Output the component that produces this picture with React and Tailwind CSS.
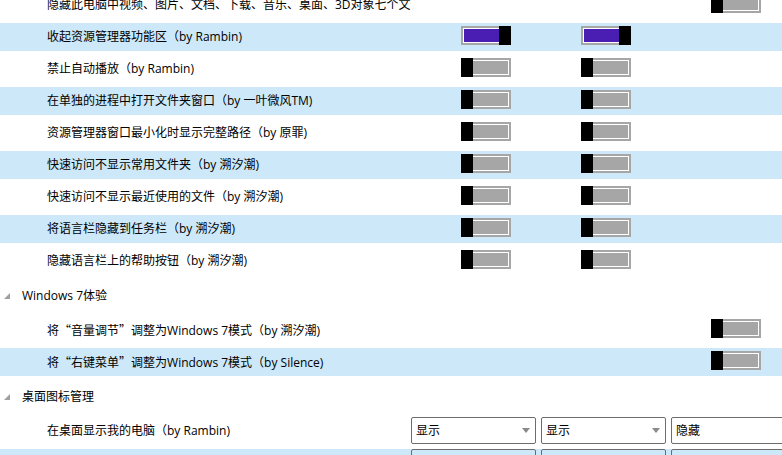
import React from "react";

const FONT = { fontFamily: '"Open Sans", "Noto Sans CJK SC", sans-serif' };

const Q = ({ children }) => <span className="font-['Noto_Sans_CJK_SC',sans-serif]">{children}</span>;

const TOP_ROWS = [
  { text: "隐藏此电脑中视频、图片、文档、下载、音乐、桌面、3D对象七个文件夹", cols: [null, null, false] },
  { text: "收起资源管理器功能区（by Rambin)", cols: [true, true, null] },
  { text: "禁止自动播放（by Rambin)", cols: [false, false, null] },
  { text: "在单独的进程中打开文件夹窗口（by 一叶微风TM)", cols: [false, false, null] },
  { text: "资源管理器窗口最小化时显示完整路径（by 原罪)", cols: [false, false, null] },
  { text: "快速访问不显示常用文件夹（by 溯汐潮)", cols: [false, false, null] },
  { text: "快速访问不显示最近使用的文件（by 溯汐潮)", cols: [false, false, null] },
  { text: "将语言栏隐藏到任务栏（by 溯汐潮)", cols: [false, false, null] },
  { text: "隐藏语言栏上的帮助按钮（by 溯汐潮)", cols: [false, false, null] },
];

const WIN7_ROWS = [
  {
    key: "volume",
    text: <>将<Q>“</Q>音量调节<Q>”</Q>调整为Windows 7模式（by 溯汐潮)</>,
    cols: [null, null, false],
  },
  {
    key: "menu",
    text: <>将<Q>“</Q>右键菜单<Q>”</Q>调整为Windows 7模式（by Silence)</>,
    cols: [null, null, false],
  },
];

const ICON_ROWS = [
  { text: "在桌面显示我的电脑（by Rambin)", values: ["显示", "显示", "隐藏"] },
  { text: "在桌面显示回收站（by Rambin)", values: ["显示", "显示", "显示"] },
];

function Toggle({ on }) {
  return (
    <div className="relative w-[50px] h-[19px] border-2 border-[#a6a6a6] bg-[#a6a6a6]">
      <div className={`h-full w-full border border-white ${on ? "bg-[#4a1db3]" : "bg-[#a6a6a6]"}`} />
      <div className={`absolute -top-[2px] h-[19px] w-[12px] bg-black ${on ? "-right-[2px]" : "-left-[2px]"}`} />
    </div>
  );
}

function Label({ text }) {
  return (
    <div className="flex items-center pl-[47px] overflow-visible">
      <div className="w-[367px] overflow-hidden whitespace-nowrap">{text}</div>
    </div>
  );
}

function ToggleRow({ text, cols, blue }) {
  return (
    <div className={`my-[2px] h-[28px] shrink-0 grid grid-cols-[411px_50px_120px_130px_1fr] ${blue ? "bg-[#cce8f9]" : ""}`}>
      <Label text={text} />
      <div />
      {cols.map((c, i) => (
        <div key={i} className="pt-[3px]">
          {c !== null && <Toggle on={c} />}
        </div>
      ))}
    </div>
  );
}

function Header({ text }) {
  return (
    <div className="h-[37px] shrink-0 flex items-center">
      <svg width="6" height="6" viewBox="0 0 6 6" className="ml-[4px] mt-[1px]">
        <polygon points="6,0 6,6 0,6" fill="#a0a0a0" />
      </svg>
      <span className="ml-[12px]">{text}</span>
    </div>
  );
}

function Select({ value, arrow }) {
  return (
    <div className="h-[27px] w-[125px] rounded-[2px] border border-[#6d6d6d] flex items-center justify-between pl-[4px] pr-[5px]">
      <span>{value}</span>
      {arrow && (
        <svg width="8" height="5" viewBox="0 0 8 5">
          <polygon points="0,0 8,0 4,5" fill="#8a8a8a" />
        </svg>
      )}
    </div>
  );
}

function SelectRow({ text, values, blue }) {
  return (
    <div className={`my-[2px] h-[28px] shrink-0 grid grid-cols-[411px_130px_130px_1fr] ${blue ? "bg-[#cce8f9]" : ""}`}>
      <Label text={text} />
      {values.map((v, i) => (
        <div key={i}>
          <Select value={v} arrow={i < 2} />
        </div>
      ))}
    </div>
  );
}

export default function App() {
  return (
    <div className="h-[455px] w-[782px] overflow-hidden bg-white text-[12px] text-black" style={FONT}>
      <div className="-mt-[11px] flex flex-col">
        {TOP_ROWS.map((r, i) => (
          <ToggleRow key={r.text} {...r} blue={i % 2 === 1} />
        ))}
        <Header text="Windows 7体验" />
        {WIN7_ROWS.map((r, i) => (
          <ToggleRow key={r.key} text={r.text} cols={r.cols} blue={i % 2 === 1} />
        ))}
        <Header text="桌面图标管理" />
        {ICON_ROWS.map((r, i) => (
          <SelectRow key={r.text} {...r} blue={i % 2 === 1} />
        ))}
      </div>
    </div>
  );
}
